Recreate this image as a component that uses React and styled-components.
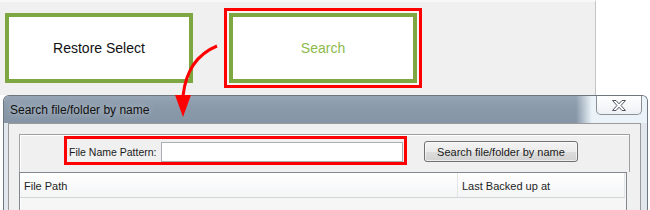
import React from "react";
import styled, { createGlobalStyle } from "styled-components";

const GlobalStyle = createGlobalStyle`
  body {
    margin: 0;
    background: #ffffff;
    font-family: "Liberation Sans", Arial, sans-serif;
  }
`;

export default function App() {
  return (
    <Page>
      <GlobalStyle />
      <TopBar>
        <TileButton>Restore Select</TileButton>
        <Highlight>
          <TileButton $active>Search</TileButton>
        </Highlight>
      </TopBar>

      <Dialog>
        <TitleBar>
          <Title>Search file/folder by name</Title>
          <CloseButton aria-label="Close">
            <svg width="14" height="11" viewBox="0 0 14 11">
              <polygon
                points="0.5,0.5 4,0.5 7,3.8 10,0.5 13.5,0.5 9,5.5 13.5,10.5 10,10.5 7,7.2 4,10.5 0.5,10.5 5,5.5"
                fill="#ffffff"
                stroke="#4f5560"
                strokeWidth="1"
                strokeLinejoin="round"
              />
            </svg>
          </CloseButton>
        </TitleBar>
        <Frame>
          <Client>
            <SearchPanel>
              <Highlight $row>
                <Label>File Name Pattern:</Label>
                <TextInput type="text" />
              </Highlight>
              <PushButton>Search file/folder by name</PushButton>
            </SearchPanel>
            <Table>
              <HeaderRow>
                <HeaderCell $width={438}>File Path</HeaderCell>
                <HeaderCell>Last Backed up at</HeaderCell>
              </HeaderRow>
            </Table>
          </Client>
        </Frame>
      </Dialog>

      <Arrow width="55" height="80" viewBox="0 0 55 80">
        <path
          d="M47 6 C30 13, 16 28, 13 56"
          fill="none"
          stroke="#ff0000"
          strokeWidth="3"
        />
        <polygon points="5,55 21,55 13,77" fill="#ff0000" />
      </Arrow>
    </Page>
  );
}

const Page = styled.div`
  position: relative;
  width: 650px;
  height: 210px;
  overflow: hidden;
`;

const TopBar = styled.div`
  box-sizing: border-box;
  width: 596px;
  height: 95px;
  background: #f0f0f0;
  border-top: 2px solid #f8f8f8;
  border-right: 1px solid #c4c4c4;
  display: flex;
  align-items: flex-start;
  gap: 31px;
  padding: 6px 0 0 5px;
`;

const TileButton = styled.div`
  box-sizing: border-box;
  width: 188px;
  height: 70px;
  margin-top: ${(p) => (p.$active ? "0" : "5px")};
  background: #ffffff;
  border: 4px solid #7fa741;
  display: flex;
  align-items: center;
  justify-content: center;
  font-size: 14px;
  color: ${(p) => (p.$active ? "#8cba4e" : "#111111")};
`;

const Highlight = styled.div`
  box-sizing: border-box;
  border: 3px solid #ff0000;
  padding: ${(p) => (p.$row ? "0 1px" : "2px")};
  background: ${(p) => (p.$row ? "#f0f0f0" : "#f6f4f4")};
  display: flex;
  align-items: center;
  ${(p) => (p.$row ? "height: 29px; margin-top: 1px;" : "")}
`;

const Dialog = styled.div`
  box-sizing: border-box;
  margin-left: 3px;
  width: 645px;
  height: 115px;
  border: 1px solid #6f7680;
  border-bottom: none;
  border-radius: 6px 6px 0 0;
  background: #e2e7ed;
  overflow: hidden;
`;

const TitleBar = styled.div`
  height: 27px;
  display: flex;
  justify-content: space-between;
  align-items: flex-start;
  background:
    linear-gradient(to right, rgba(255, 255, 255, 0) 0, rgba(255, 255, 255, 0) 572px, rgba(240, 248, 252, 0.95) 588px),
    linear-gradient(to bottom, #97a5b5 0%, #8a9aab 40%, #8595a6 100%);
`;

const Title = styled.span`
  padding-left: 6px;
  line-height: 28px;
  font-size: 12px;
  color: #111;
  text-shadow: 0 0 6px rgba(255, 255, 255, 0.55);
`;

const CloseButton = styled.div`
  box-sizing: border-box;
  width: 46px;
  height: 19px;
  margin-right: 5px;
  border: 1px solid #8c9198;
  border-top: none;
  border-radius: 0 0 5px 5px;
  background: linear-gradient(to bottom, #ffffff, #eef1f4);
  display: flex;
  align-items: center;
  justify-content: center;
`;

const Frame = styled.div`
  padding: 0 6px 0 4px;
  height: 100%;
`;

const Client = styled.div`
  box-sizing: border-box;
  height: 100%;
  background: #f0f0f0;
  border: 1px solid #9a9a9a;
  border-bottom: none;
  padding: 10px 10px 0 10px;
`;

const SearchPanel = styled.div`
  box-sizing: border-box;
  height: 38px;
  border: 1px solid #a0a0a0;
  border-bottom: none;
  box-shadow: inset 1px 1px 0 #ffffff;
  display: flex;
  align-items: flex-start;
  gap: 17px;
  padding-left: 44px;
`;

const Label = styled.span`
  box-sizing: border-box;
  width: 93px;
  font-size: 10.5px;
  white-space: nowrap;
  color: #1a1a1a;
  padding-left: 1px;
  margin-top: 2px;
`;

const TextInput = styled.input`
  box-sizing: border-box;
  width: 242px;
  height: 20px;
  margin: 3px 0 0 0;
  padding: 0 3px;
  border: 1px solid #abadb3;
  background: #ffffff;
  outline: none;
`;

const PushButton = styled.div`
  box-sizing: border-box;
  width: 154px;
  height: 21px;
  margin-top: 6px;
  border: 1px solid #707070;
  border-radius: 3px;
  background: linear-gradient(to bottom, #f3f3f3 0%, #ebebeb 50%, #dddddd 51%, #d2d2d2 100%);
  box-shadow: inset 0 0 0 1px rgba(255, 255, 255, 0.6);
  font-size: 11px;
  color: #1a1a1a;
  display: flex;
  align-items: center;
  justify-content: center;
`;

const Table = styled.div`
  box-sizing: border-box;
  width: 608px;
  height: 60px;
  border: 1px solid #828790;
  border-bottom: none;
  background: #f6f6f6;
  box-shadow: inset 1px 0 0 #ffffff;
`;

const HeaderRow = styled.div`
  display: flex;
  height: 24px;
  border-bottom: 1px solid #d5d5d5;
  background: linear-gradient(to bottom, #ffffff, #f4f5f6);
  margin-right: 1px;
`;

const HeaderCell = styled.div`
  box-sizing: border-box;
  ${(p) => (p.$width ? `width: ${p.$width}px;` : "flex: 1;")}
  padding-left: 4px;
  font-size: 11px;
  line-height: 26px;
  color: #1e1e1e;
  border-right: 1px solid #e3e4e6;
`;

const Arrow = styled.svg`
  position: absolute;
  left: 170px;
  top: 40px;
  pointer-events: none;
`;
